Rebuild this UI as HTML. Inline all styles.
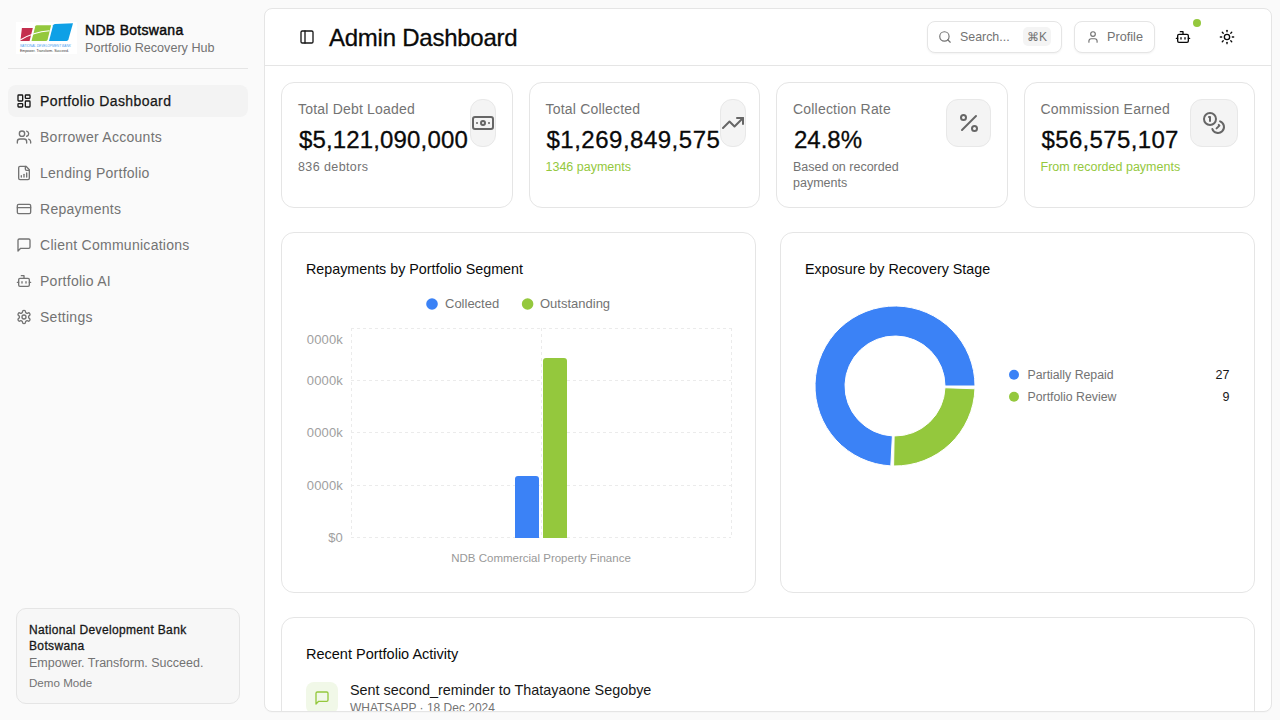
<!DOCTYPE html>
<html><head><meta charset="utf-8">
<style>
*{box-sizing:border-box;margin:0;padding:0}
html,body{width:1280px;height:720px;overflow:hidden;background:#fafafa;font-family:"Liberation Sans",sans-serif;color:#0a0a0a}
.abs{position:absolute}
svg.i{position:absolute;fill:none;stroke:currentColor;stroke-width:2;stroke-linecap:round;stroke-linejoin:round}
.t{position:absolute;white-space:nowrap}
/* sidebar */
#sb{position:absolute;left:0;top:0;width:256px;height:720px;background:#fafafa}
.nav{position:absolute;left:8px;width:240px;height:32px;border-radius:8px;color:#737373}
.nav.act{background:#f3f3f3;color:#171717}
.nav svg{left:8px;top:8px;width:16px;height:16px}
.nav span{position:absolute;left:32px;top:0;line-height:32px;font-size:14px;letter-spacing:0.27px}
.nav.act span{letter-spacing:0.4px;-webkit-text-stroke:0.25px #171717}
/* main */
#main{position:absolute;left:264px;top:8px;width:1008px;height:704px;background:#fff;border:1px solid #e5e5e5;border-radius:8px;overflow:hidden;box-shadow:0 1px 1px rgba(0,0,0,.02)}
.card{position:absolute;background:#fff;border:1px solid #e5e5e5;border-radius:13px}
.btn{position:absolute;height:32px;border:1px solid #e5e5e5;border-radius:8px;background:#fff;box-shadow:0 1px 2px rgba(0,0,0,.05)}
.ibox{position:absolute;top:16px;height:48px;border:1px solid #e8e8e8;background:#f4f4f4;border-radius:12px;color:#666}
.ibox svg{width:24px;height:24px;top:11px}
.lbl{position:absolute;left:16px;top:16px;font-size:14px;line-height:20px;color:#737373;letter-spacing:0.2px}
.val{position:absolute;left:17px;top:41px;font-size:24px;line-height:32px;color:#0a0a0a;-webkit-text-stroke:0.3px #0a0a0a}
.sub{position:absolute;left:16px;top:76px;font-size:12.5px;line-height:16px;color:#737373}
.green{color:#94c83d}
</style></head><body>
<div id="sb">
  <!-- logo -->
  <svg class="abs" style="left:16px;top:22px" width="61" height="32" viewBox="0 0 61 32">
    <rect width="61" height="32" fill="#fff"/>
    <path d="M5.9 6 L16.8 6 L13.6 18.9 L4.4 18.9 Z" fill="#c4304f"/>
    <path d="M20.8 3.15 L35.1 3.15 L31.6 17.8 Q31.3 18.9 30.2 18.9 L15.5 18.9 L19.3 4.3 Q19.6 3.2 20.8 3.15 Z" fill="#94c83d"/>
    <path d="M39 1.9 L57 1.35 L52.4 17.6 Q52 18.9 50.6 18.9 L33 18.9 L37.1 3.2 Q37.5 2 39 1.9 Z" fill="#0ea0e6"/>
    <path d="M4.2 18 Q17 10 33.5 8.7" stroke="#fff" stroke-width="1.1" fill="none"/>
    <text x="3.9" y="24.9" font-family="Liberation Sans" font-weight="400" font-style="italic" font-size="3.6" textLength="51" lengthAdjust="spacingAndGlyphs" fill="#4a9ff0">NATIONAL DEVELOPMENT BANK</text>
    <text x="3.9" y="30.4" font-family="Liberation Sans" font-size="4.3" textLength="49" lengthAdjust="spacingAndGlyphs" fill="#333">Empower. Transform. Succeed.</text>
  </svg>
  <div class="t" style="left:85px;top:20px;font-size:14px;line-height:20px;font-weight:400;-webkit-text-stroke:0.45px #0a0a0a;letter-spacing:0.3px;color:#0a0a0a">NDB Botswana</div>
  <div class="t" style="left:85px;top:39px;font-size:12.6px;line-height:18px;color:#737373">Portfolio Recovery Hub</div>
  <div class="abs" style="left:8px;top:68px;width:240px;height:1px;background:#e5e5e5"></div>

  <div class="nav act" style="top:85px"><svg class="i" viewBox="0 0 24 24"><rect width="7" height="9" x="3" y="3" rx="1"/><rect width="7" height="5" x="14" y="3" rx="1"/><rect width="7" height="9" x="14" y="12" rx="1"/><rect width="7" height="5" x="3" y="16" rx="1"/></svg><span>Portfolio Dashboard</span></div>
  <div class="nav" style="top:121px"><svg class="i" viewBox="0 0 24 24"><path d="M16 21v-2a4 4 0 0 0-4-4H6a4 4 0 0 0-4 4v2"/><circle cx="9" cy="7" r="4"/><path d="M22 21v-2a4 4 0 0 0-3-3.87"/><path d="M16 3.13a4 4 0 0 1 0 7.75"/></svg><span>Borrower Accounts</span></div>
  <div class="nav" style="top:157px"><svg class="i" viewBox="0 0 24 24"><path d="M15 2H6a2 2 0 0 0-2 2v16a2 2 0 0 0 2 2h12a2 2 0 0 0 2-2V7Z"/><path d="M14 2v4a2 2 0 0 0 2 2h4"/><path d="M8 18v-2"/><path d="M12 18v-4"/><path d="M16 18v-6"/></svg><span>Lending Portfolio</span></div>
  <div class="nav" style="top:193px"><svg class="i" viewBox="0 0 24 24"><rect width="20" height="14" x="2" y="5" rx="2"/><line x1="2" x2="22" y1="10" y2="10"/></svg><span>Repayments</span></div>
  <div class="nav" style="top:229px"><svg class="i" viewBox="0 0 24 24"><path d="M21 15a2 2 0 0 1-2 2H7l-4 4V5a2 2 0 0 1 2-2h14a2 2 0 0 1 2 2z"/></svg><span>Client Communications</span></div>
  <div class="nav" style="top:265px"><svg class="i" viewBox="0 0 24 24"><path d="M12 8V4H8"/><rect width="16" height="12" x="4" y="8" rx="2"/><path d="M2 14h2"/><path d="M20 14h2"/><path d="M15 13v2"/><path d="M9 13v2"/></svg><span>Portfolio AI</span></div>
  <div class="nav" style="top:301px"><svg class="i" viewBox="0 0 24 24"><path d="M12.22 2h-.44a2 2 0 0 0-2 2v.18a2 2 0 0 1-1 1.73l-.43.25a2 2 0 0 1-2 0l-.15-.08a2 2 0 0 0-2.73.73l-.22.38a2 2 0 0 0 .73 2.730l.15.1a2 2 0 0 1 1 1.72v.51a2 2 0 0 1-1 1.74l-.15.09a2 2 0 0 0-.73 2.73l.22.38a2 2 0 0 0 2.73.73l.15-.08a2 2 0 0 1 2 0l.43.25a2 2 0 0 1 1 1.73V20a2 2 0 0 0 2 2h.44a2 2 0 0 0 2-2v-.18a2 2 0 0 1 1-1.73l.43-.25a2 2 0 0 1 2 0l.15.08a2 2 0 0 0 2.73-.73l.22-.39a2 2 0 0 0-.73-2.73l-.15-.08a2 2 0 0 1-1-1.74v-.5a2 2 0 0 1 1-1.74l.15-.09a2 2 0 0 0 .73-2.73l-.22-.38a2 2 0 0 0-2.73-.73l-.15.08a2 2 0 0 1-2 0l-.43-.25a2 2 0 0 1-1-1.73V4a2 2 0 0 0-2-2z"/><circle cx="12" cy="12" r="3"/></svg><span>Settings</span></div>

  <div class="abs" style="left:16px;top:608px;width:224px;height:96px;background:#f7f7f7;border:1px solid #e5e5e5;border-radius:10px">
    <div class="t" style="left:12px;top:13px;font-size:12px;line-height:16px;font-weight:400;-webkit-text-stroke:0.3px #171717;letter-spacing:0.35px;color:#171717;white-space:normal;width:190px">National Development Bank Botswana</div>
    <div class="t" style="left:12px;top:46px;font-size:12.5px;line-height:16px;color:#737373">Empower. Transform. Succeed.</div>
    <div class="t" style="left:12px;top:66px;font-size:11.6px;line-height:16px;color:#737373">Demo Mode</div>
  </div>
</div>

<div id="main">
  <!-- header -->
  <svg class="i" style="left:34px;top:20px;width:16px;height:16px;color:#171717" viewBox="0 0 24 24"><rect width="18" height="18" x="3" y="3" rx="2"/><path d="M9 3v18"/></svg>
  <div class="t" style="left:64px;top:12.7px;font-size:24px;line-height:32px;color:#0a0a0a;letter-spacing:-0.25px;-webkit-text-stroke:0.3px #0a0a0a">Admin Dashboard</div>
  <div class="abs" style="left:0;top:56px;width:1006px;height:1px;background:#e5e5e5"></div>

  <div class="btn" style="left:662px;top:12px;width:135px">
    <svg class="i" style="left:10px;top:8px;width:14px;height:14px;color:#737373" viewBox="0 0 24 24"><circle cx="11" cy="11" r="8"/><path d="m21 21-4.3-4.3"/></svg>
    <div class="t" style="left:32px;top:0;line-height:30px;font-size:12.4px;color:#737373">Search...</div>
    <div class="abs" style="left:95px;top:5px;width:28px;height:19px;border-radius:5px;background:#f4f4f4;color:#737373;font-size:12px;line-height:20px;text-align:center">&#8984;K</div>
  </div>
  <div class="btn" style="left:809px;top:12px;width:81px">
    <svg class="i" style="left:11px;top:8px;width:14px;height:14px;color:#737373" viewBox="0 0 24 24"><path d="M19 21v-2a4 4 0 0 0-4-4H9a4 4 0 0 0-4 4v2"/><circle cx="12" cy="7" r="4"/></svg>
    <div class="t" style="left:32px;top:0;line-height:30px;font-size:12.7px;color:#737373">Profile</div>
  </div>
  <svg class="i" style="left:910px;top:20px;width:16px;height:16px;color:#0a0a0a" viewBox="0 0 24 24"><path d="M12 8V4H8"/><rect width="16" height="12" x="4" y="8" rx="2"/><path d="M2 14h2"/><path d="M20 14h2"/><path d="M15 13v2"/><path d="M9 13v2"/></svg>
  <div class="abs" style="left:928px;top:10px;width:8px;height:8px;border-radius:50%;background:#94c83d"></div>
  <svg class="i" style="left:954px;top:20px;width:16px;height:16px;color:#0a0a0a" viewBox="0 0 24 24"><circle cx="12" cy="12" r="4"/><path d="M12 2v2"/><path d="M12 20v2"/><path d="m4.93 4.93 1.41 1.41"/><path d="m17.66 17.66 1.41 1.41"/><path d="M2 12h2"/><path d="M20 12h2"/><path d="m6.34 17.66-1.41 1.41"/><path d="m19.07 4.93-1.41 1.41"/></svg>

  <!-- KPI cards -->
  <div class="card" style="left:16px;top:73px;width:231.5px;height:126px">
    <div class="lbl">Total Debt Loaded</div>
    <div class="val" style="letter-spacing:0.15px">$5,121,090,000</div>
    <div class="sub" style="letter-spacing:0.4px">836 debtors</div>
    <div class="ibox" style="left:188px;width:26px"><svg class="i" style="left:0px" viewBox="0 0 24 24"><rect width="20" height="12" x="2" y="6" rx="2"/><circle cx="12" cy="12" r="2"/><path d="M6 12h.01M18 12h.01"/></svg></div>
  </div>
  <div class="card" style="left:263.5px;top:73px;width:231.5px;height:126px">
    <div class="lbl">Total Collected</div>
    <div class="val" style="letter-spacing:0.5px">$1,269,849,575</div>
    <div class="sub green">1346 payments</div>
    <div class="ibox" style="left:190.5px;width:26px"><svg class="i" style="left:0px" viewBox="0 0 24 24"><polyline points="22 7 13.5 15.5 8.5 10.5 2 17"/><polyline points="16 7 22 7 22 13"/></svg></div>
  </div>
  <div class="card" style="left:511px;top:73px;width:231.5px;height:126px">
    <div class="lbl">Collection Rate</div>
    <div class="val">24.8%</div>
    <div class="sub" style="white-space:normal;width:130px">Based on recorded payments</div>
    <div class="ibox" style="left:169px;width:45px"><svg class="i" style="left:9.5px" viewBox="0 0 24 24"><line x1="19" x2="5" y1="5" y2="19"/><circle cx="6.5" cy="6.5" r="2.5"/><circle cx="17.5" cy="17.5" r="2.5"/></svg></div>
  </div>
  <div class="card" style="left:758.5px;top:73px;width:231.5px;height:126px">
    <div class="lbl">Commission Earned</div>
    <div class="val" style="letter-spacing:0.35px">$56,575,107</div>
    <div class="sub green">From recorded payments</div>
    <div class="ibox" style="left:165.5px;width:48px"><svg class="i" style="left:11px" viewBox="0 0 24 24"><circle cx="8" cy="8" r="6"/><path d="M18.09 10.37A6 6 0 1 1 10.34 18"/><path d="M7 6h1v4"/><path d="m16.71 13.88.7.71-2.82 2.82"/></svg></div>
  </div>

  <!-- chart cards -->
  <div class="card" style="left:16px;top:223px;width:475px;height:361px">
    <svg class="abs" style="left:-1px;top:-1px" width="475" height="361" viewBox="281 232 475 361" font-family="Liberation Sans">
      <g stroke="#ebebeb" stroke-width="1" stroke-dasharray="3 3" fill="none">
        <line x1="351" y1="328.5" x2="731" y2="328.5"/>
        <line x1="351" y1="380.5" x2="731" y2="380.5"/>
        <line x1="351" y1="432.5" x2="731" y2="432.5"/>
        <line x1="351" y1="485.5" x2="731" y2="485.5"/>
        <line x1="351" y1="537.5" x2="731" y2="537.5"/>
        <line x1="351.5" y1="328" x2="351.5" y2="538"/>
        <line x1="541.5" y1="328" x2="541.5" y2="538"/>
        <line x1="731.5" y1="328" x2="731.5" y2="538"/>
      </g>
      <g fill="#a0a0a0" font-size="13" text-anchor="end" letter-spacing="0.15">
        <text x="343" y="344">0000k</text>
        <text x="343" y="385">0000k</text>
        <text x="343" y="437">0000k</text>
        <text x="343" y="490">0000k</text>
        <text x="343" y="542">$0</text>
      </g>
      <path d="M515,538 V479 Q515,476 518,476 H536 Q539,476 539,479 V538 Z" fill="#3b82f6"/>
      <path d="M543,538 V361 Q543,358 546,358 H564 Q567,358 567,361 V538 Z" fill="#94c83d"/>
      <text x="541" y="562" fill="#999" font-size="11.5" text-anchor="middle">NDB Commercial Property Finance</text>
      <circle cx="432" cy="304" r="5.8" fill="#3b82f6"/>
      <text x="445" y="308" fill="#737373" font-size="13">Collected</text>
      <circle cx="527.6" cy="304" r="5.8" fill="#94c83d"/>
      <text x="540" y="308" fill="#737373" font-size="13">Outstanding</text>
    </svg>
    <div class="t" style="left:24px;top:26px;font-size:14.3px;line-height:20px;color:#0a0a0a">Repayments by Portfolio Segment</div>
  </div>
  <div class="card" style="left:515px;top:223px;width:475px;height:361px">
    <svg class="abs" style="left:-1px;top:-1px" width="475" height="361" viewBox="780 232 475 361" font-family="Liberation Sans">
      <path d="M975.00,386.00 A80,80 0 1 0 890.81,465.89 L892.38,435.93 A50,50 0 1 1 945.00,386.00 Z" fill="#3b82f6" stroke="#fff" stroke-width="1"/>
      <path d="M893.60,465.99 A80,80 0 0 0 974.95,388.79 L944.97,387.74 A50,50 0 0 1 894.13,435.99 Z" fill="#94c83d" stroke="#fff" stroke-width="1"/>
      <circle cx="1014" cy="374.7" r="5" fill="#3b82f6"/>
      <circle cx="1014" cy="396.8" r="5" fill="#94c83d"/>
      <text x="1027.5" y="378.8" fill="#737373" font-size="12.3">Partially Repaid</text>
      <text x="1027.5" y="400.9" fill="#737373" font-size="12.3">Portfolio Review</text>
      <text x="1229.5" y="378.8" fill="#171717" font-size="12.5" text-anchor="end">27</text>
      <text x="1229.5" y="400.9" fill="#171717" font-size="12.5" text-anchor="end">9</text>
    </svg>
    <div class="t" style="left:24px;top:26px;font-size:14.3px;line-height:20px;color:#0a0a0a">Exposure by Recovery Stage</div>
  </div>

  <!-- activity -->
  <div class="card" style="left:16px;top:608px;width:974px;height:200px">
    <div class="t" style="left:24px;top:26px;font-size:14.5px;line-height:20px;color:#0a0a0a">Recent Portfolio Activity</div>
    <div class="abs" style="left:24px;top:64px;width:32px;height:32px;border-radius:8px;background:#f1f8e8">
      <svg class="i" style="left:8px;top:8px;width:16px;height:16px;color:#94c83d" viewBox="0 0 24 24"><path d="M21 15a2 2 0 0 1-2 2H7l-4 4V5a2 2 0 0 1 2-2h14a2 2 0 0 1 2 2z"/></svg>
    </div>
    <div class="t" style="left:68px;top:62px;font-size:14.4px;line-height:20px;color:#171717">Sent second_reminder to Thatayaone Segobye</div>
    <div class="t" style="left:68px;top:82px;font-size:12px;line-height:16px;color:#737373">WHATSAPP &middot; 18 Dec 2024</div>
  </div>
</div>
</body></html>
